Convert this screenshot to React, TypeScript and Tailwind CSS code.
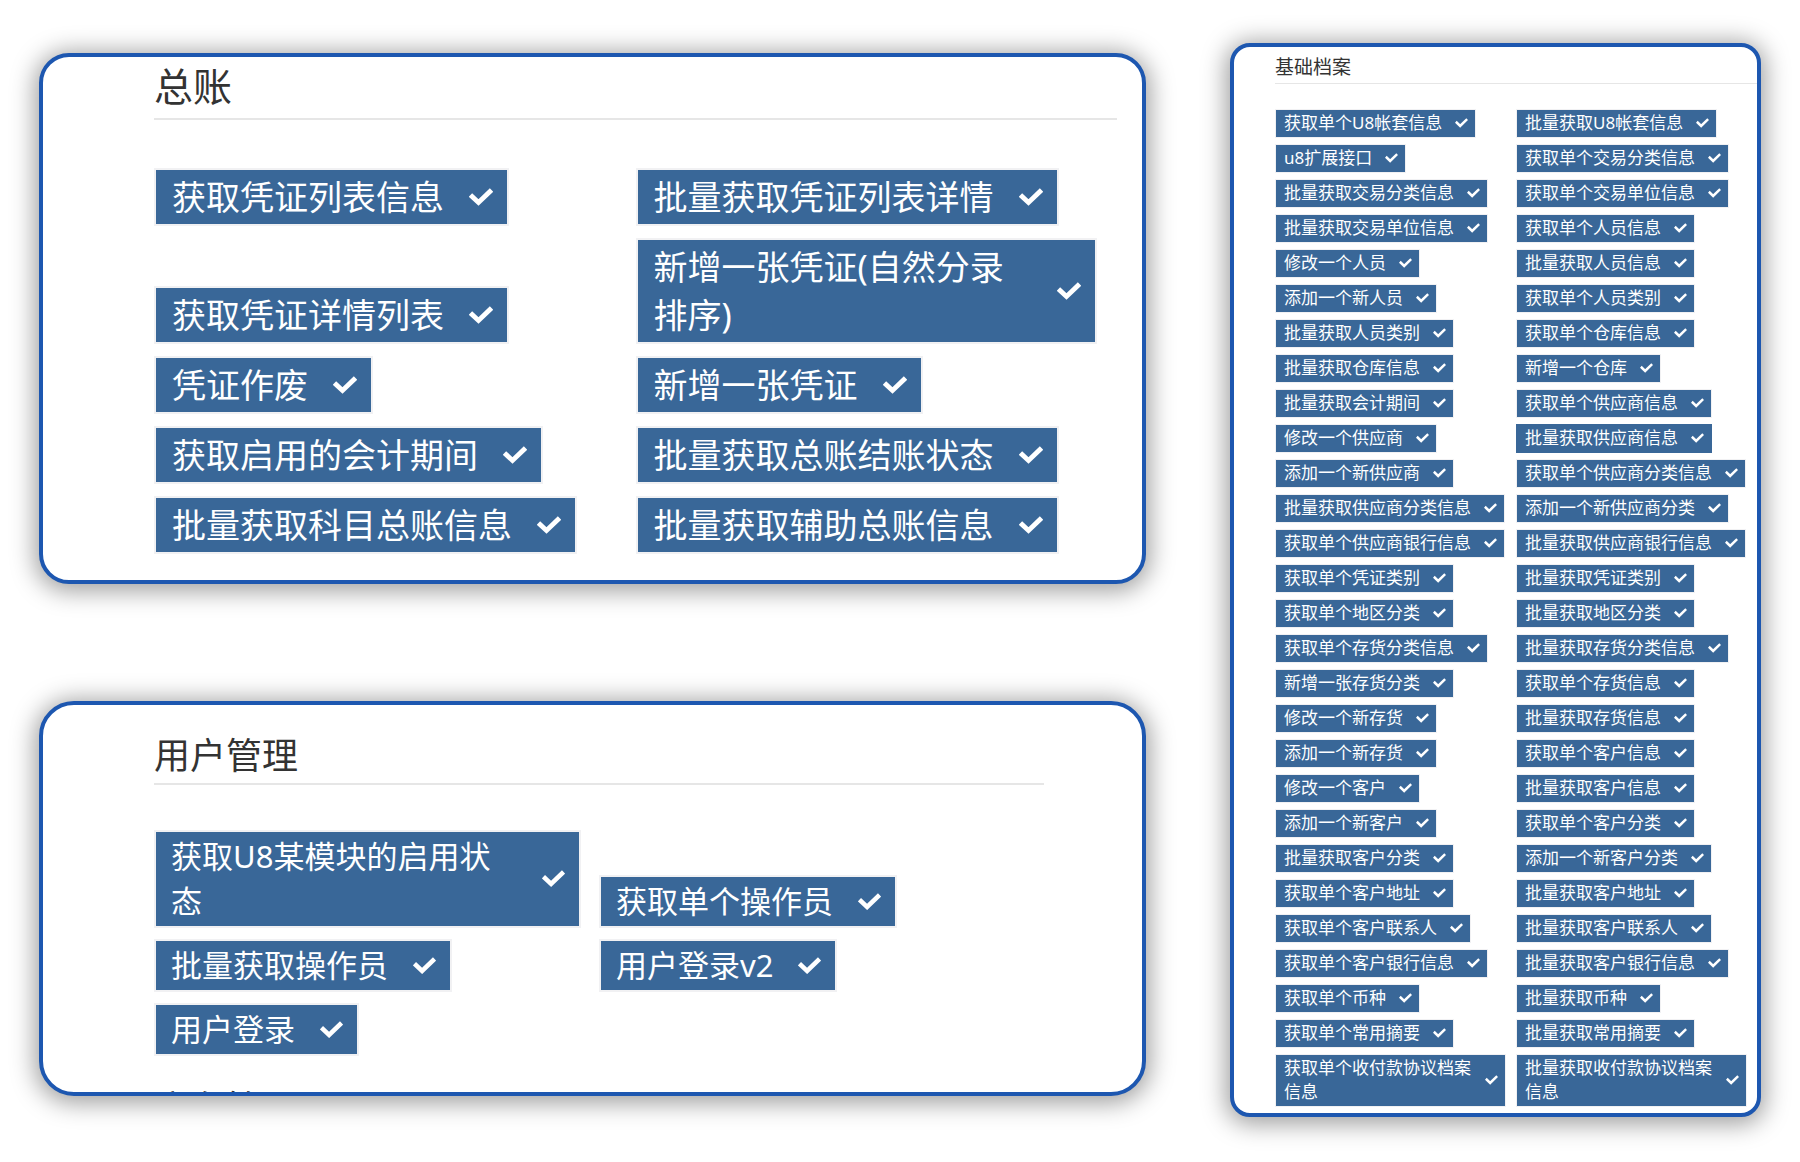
import React from 'react';

type Size = 'sm' | 'md' | 'lg';

interface ApiLink {
  name: string;
  active?: boolean;
}

interface ApiPanelProps {
  title: string;
  items: ApiLink[];
  size: Size;
  nextTitle?: string;
}

const toLinks = (names: string[]): ApiLink[] => names.map((name) => ({ name }));

const ledgerApis = toLinks([
  '获取凭证列表信息',
  '批量获取凭证列表详情',
  '获取凭证详情列表',
  '新增一张凭证(自然分录排序)',
  '凭证作废',
  '新增一张凭证',
  '获取启用的会计期间',
  '批量获取总账结账状态',
  '批量获取科目总账信息',
  '批量获取辅助总账信息',
]);

const userApis = toLinks([
  '获取U8某模块的启用状态',
  '获取单个操作员',
  '批量获取操作员',
  '用户登录v2',
  '用户登录',
]);

const archiveApis = toLinks([
  '获取单个U8帐套信息',
  '批量获取U8帐套信息',
  'u8扩展接口',
  '获取单个交易分类信息',
  '批量获取交易分类信息',
  '获取单个交易单位信息',
  '批量获取交易单位信息',
  '获取单个人员信息',
  '修改一个人员',
  '批量获取人员信息',
  '添加一个新人员',
  '获取单个人员类别',
  '批量获取人员类别',
  '获取单个仓库信息',
  '批量获取仓库信息',
  '新增一个仓库',
  '批量获取会计期间',
  '获取单个供应商信息',
  '修改一个供应商',
  '批量获取供应商信息',
  '添加一个新供应商',
  '获取单个供应商分类信息',
  '批量获取供应商分类信息',
  '添加一个新供应商分类',
  '获取单个供应商银行信息',
  '批量获取供应商银行信息',
  '获取单个凭证类别',
  '批量获取凭证类别',
  '获取单个地区分类',
  '批量获取地区分类',
  '获取单个存货分类信息',
  '批量获取存货分类信息',
  '新增一张存货分类',
  '获取单个存货信息',
  '修改一个新存货',
  '批量获取存货信息',
  '添加一个新存货',
  '获取单个客户信息',
  '修改一个客户',
  '批量获取客户信息',
  '添加一个新客户',
  '获取单个客户分类',
  '批量获取客户分类',
  '添加一个新客户分类',
  '获取单个客户地址',
  '批量获取客户地址',
  '获取单个客户联系人',
  '批量获取客户联系人',
  '获取单个客户银行信息',
  '批量获取客户银行信息',
  '获取单个币种',
  '批量获取币种',
  '获取单个常用摘要',
  '批量获取常用摘要',
  '获取单个收付款协议档案信息',
  '批量获取收付款协议档案信息',
]).map((item) => ({ ...item, active: item.name === '批量获取供应商信息' }));

const styles = {
  lg: {
    panel: 'rounded-[30px] pl-[111px] pr-[25px] pb-[26px]',
    title: 'text-[39px] leading-[57px] pb-1 border-b-2',
    grid: 'mt-12 gap-y-3',
    cell: 'pr-5',
    chip: 'border-2 pl-4 pr-[14px] py-[3px] gap-[25px] text-[34px] leading-[48px]',
    check: 'w-6',
  },
  md: {
    panel: 'rounded-[35px] pl-[111px] pr-[98px] pt-[23px]',
    title: 'text-[36px] leading-[55px] border-b-2',
    grid: 'mt-[45px] gap-y-[11px]',
    cell: 'pr-[18px]',
    chip: 'border-2 pl-[15px] pr-[14px] py-[2px] gap-[25px] text-[31px] leading-[45px]',
    check: 'w-[23px]',
  },
  sm: {
    panel: 'rounded-[20px] pl-[41px] pt-1 pb-[6px]',
    title: 'text-[19px] leading-[32px] border-b',
    grid: 'mt-[25px] gap-y-[6px]',
    cell: 'pr-[10px]',
    chip: 'border pl-2 pr-[7px] pt-px pb-[2px] gap-[13px] text-[17px] leading-6',
    check: 'w-[13px]',
  },
};

const CheckIcon = ({ className }: { className: string }) => (
  <svg viewBox="0 0 24 18" fill="none" className={`shrink-0 ${className}`} aria-hidden="true">
    <path d="M1.5 7 L9.5 14.5 L22.5 2" stroke="#fff" strokeWidth="4.8" />
  </svg>
);

const ApiPanel: React.FC<ApiPanelProps> = ({ title, items, size, nextTitle }) => {
  const s = styles[size];

  return (
    <section
      className={`overflow-hidden border-4 border-[#1d57b0] bg-white shadow-[0_3px_24px_4px_rgba(0,0,0,0.38)] ${s.panel}`}
    >
      <h2 className={`border-[#e6e6e6] text-[#333] ${s.title}`}>{title}</h2>
      <ul className={`grid grid-cols-2 items-end ${s.grid}`}>
        {items.map((item) => (
          <li key={item.name} className={`flex ${s.cell}`}>
            <a
              href="#"
              className={`flex items-center bg-[#396798] bg-clip-padding text-white ${
                item.active ? 'border-[#396798]' : 'border-[#f1f1f3]'
              } ${s.chip}`}
            >
              <span>{item.name}</span>
              <CheckIcon className={s.check} />
            </a>
          </li>
        ))}
      </ul>
      {/* Next section starts right at the fold */}
      {nextTitle && (
        <div className="mt-[25px] h-[11px] overflow-hidden">
          <h2 className="text-[36px] leading-[55px] text-[#333]">{nextTitle}</h2>
        </div>
      )}
    </section>
  );
};

export default function App() {
  return (
    <main className="grid min-h-screen grid-cols-[1107fr_531fr] items-start gap-x-[84px] bg-white pt-[43px] pr-[39px] pb-11 pl-[39px] font-['Noto_Sans','Noto_Sans_CJK_SC',sans-serif]">
      <div className="flex flex-col gap-[117px] pt-[10px]">
        <ApiPanel title="总账" items={ledgerApis} size="lg" />
        <ApiPanel title="用户管理" items={userApis} size="md" nextTitle="库存管理" />
      </div>
      <ApiPanel title="基础档案" items={archiveApis} size="sm" />
    </main>
  );
}
